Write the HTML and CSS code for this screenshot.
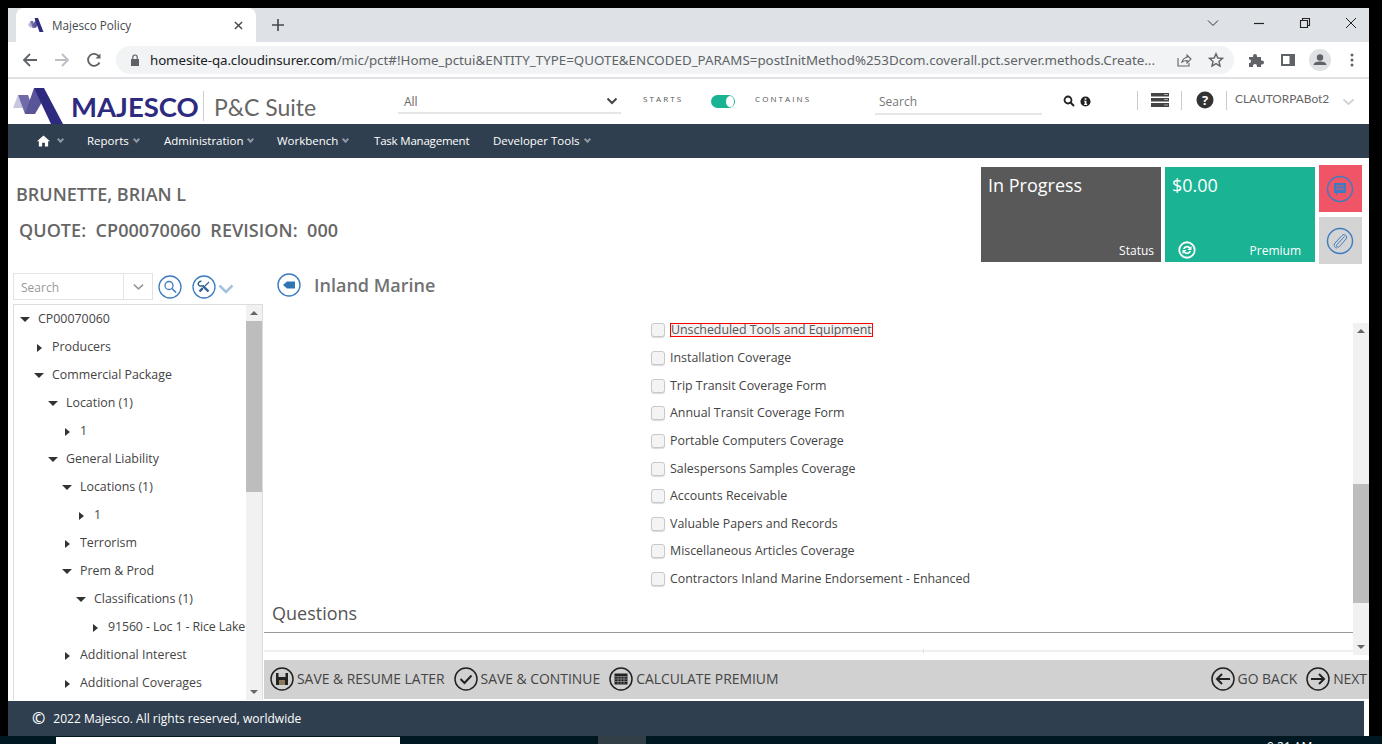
FILE: index.html
```html
<!doctype html>
<html lang="en">
<head>
	<meta charset="utf-8">
	<title>Majesco Policy</title>
	<link rel="stylesheet" href="styles.css">
</head>
<body>
<div class="window">
	<div class="tabstrip">
		<div class="tab">
			<svg class="favicon" viewBox="0 0 16 14"><path d="M0 7 2.500 3 5 7 3 10z" fill="#b7b3d6"/><path d="M2.500 3H5L7.500 10H4.500z" fill="#6f6aa8"/><path d="M5 7 8 1 10 7 7.500 10z" fill="#5a5599"/><path d="M6.500 0H10L15.500 14H11.500z" fill="#2e2a7f"/></svg>
			<span class="tab-title">Majesco Policy</span>
			<svg class="tab-close" viewBox="0 0 10 10"><path d="M1 1 9 9M9 1 1 9" stroke="#45494d" stroke-width="1.600"/></svg>
		</div>
		<svg class="tab-new" viewBox="0 0 12 12"><path d="M6 0V12M0 6H12" stroke="#45494d" stroke-width="1.600"/></svg>
		<div class="win-controls">
			<svg viewBox="0 0 12 12"><path d="M1 3.500 6 8.500 11 3.500" fill="none" stroke="#333" stroke-width="1"/></svg>
			<svg viewBox="0 0 12 12"><path d="M1 6.500H11" stroke="#222" stroke-width="1.200"/></svg>
			<svg viewBox="0 0 12 12"><path d="M1.500 3.500H8.500V10.500H1.500zM3.500 3.500V1.500H10.500V8.500H8.500" fill="none" stroke="#222" stroke-width="1.100"/></svg>
			<svg viewBox="0 0 12 12"><path d="M1 1 11 11M11 1 1 11" stroke="#222" stroke-width="1"/></svg>
		</div>
	</div>

	<div class="toolbar">
		<svg class="tb-icon" viewBox="0 0 16 16"><path d="M15 8H2M8 2 2 8 8 14" fill="none" stroke="#5f6368" stroke-width="1.800"/></svg>
		<svg class="tb-icon" viewBox="0 0 16 16"><path d="M1 8H14M8 2 14 8 8 14" fill="none" stroke="#bcc0c4" stroke-width="1.800"/></svg>
		<svg class="tb-icon" viewBox="0 0 16 16"><path d="M13.500 10.500A6 6 0 1 1 13 4.500" fill="none" stroke="#5f6368" stroke-width="1.800"/><path d="M14.500 1.500V6.500H9.500z" fill="#5f6368"/></svg>
		<div class="omnibox">
			<svg class="lock" viewBox="0 0 10 12"><path d="M1 5H9V12H1z" fill="#5f6368"/><path d="M2.800 5V3.200A2.200 2.200 0 0 1 7.200 3.200V5" fill="none" stroke="#5f6368" stroke-width="1.200"/></svg>
			<span class="url"><b>homesite-qa.cloudinsurer.com</b>/mic/pct#!Home_pctui&amp;ENTITY_TYPE=QUOTE&amp;ENCODED_PARAMS=postInitMethod%253Dcom.coverall.pct.server.methods.Create...</span>
			<svg class="omni-icon share" viewBox="0 0 16 16"><path d="M2 6V14H13V11M6 10C7 7 9 5.500 11 5.500V3L15 7 11 11V8.500C9 8.500 7.500 9 6 10z" fill="none" stroke="#5f6368" stroke-width="1.100"/></svg>
			<svg class="omni-icon star" viewBox="0 0 16 16"><path d="M8 1.800 9.800 6 14.500 6.400 11 9.400 12 14 8 11.600 4 14 5 9.400 1.500 6.400 6.200 6z" fill="none" stroke="#5f6368" stroke-width="1.400"/></svg>
		</div>
		<svg class="tb-icon puzzle" viewBox="0 0 16 16"><path d="M1 5H5V4A2 2 0 0 1 9 4V5H13V8.500H14A2 2 0 0 1 14 12.500H13V15H9V14A2 2 0 0 0 5 14V15H1V11H2A2 2 0 0 0 2 7.500H1z" fill="#5f6368"/></svg>
		<svg class="tb-icon" viewBox="0 0 16 16"><path d="M1 2H15V14H1z" fill="#5f6368"/><path d="M3 4H9.500V12H3z" fill="#fff"/></svg>
		<span class="avatar"><svg viewBox="0 0 22 22"><circle cx="11" cy="8.500" r="3.200" fill="#5f6368"/><path d="M4.500 16C5 13 8 12.500 11 12.500S17 13 17.500 16z" fill="#5f6368"/></svg></span>
		<svg class="tb-icon" viewBox="0 0 16 16"><circle cx="8" cy="3" r="1.500" fill="#5f6368"/><circle cx="8" cy="8" r="1.500" fill="#5f6368"/><circle cx="8" cy="13" r="1.500" fill="#5f6368"/></svg>
	</div>

	<header class="app-head">
		<svg class="logo-mark" viewBox="0 0 52 36"><path d="M0 20 5 7 10 20z" fill="#c9c6e0"/><path d="M5 7H15L22 26H12z" fill="#6f6aa8"/><path d="M12 26H22L32 9 21 0z" fill="#5a5599"/><path d="M21 0H31L50 36H38z" fill="#2e2a7f"/></svg>
		<span class="logo-word">MAJESCO</span>
		<span class="logo-sep"></span>
		<span class="logo-suite">P&amp;C Suite</span>
		<div class="scope-select"><span>All</span><svg viewBox="0 0 12 8"><path d="M1.500 1.500 6 6 10.500 1.500" fill="none" stroke="#444" stroke-width="2"/></svg></div>
		<span class="match-label starts">STARTS</span>
		<span class="toggle"><i></i></span>
		<span class="match-label contains">CONTAINS</span>
		<div class="head-search">Search</div>
		<svg class="head-mag" viewBox="0 0 12 12"><circle cx="5" cy="5" r="3.500" fill="none" stroke="#222" stroke-width="1.800"/><path d="M7.500 7.500 11 11" stroke="#222" stroke-width="2"/></svg>
		<svg class="head-info" viewBox="0 0 12 12"><circle cx="6" cy="6" r="5.500" fill="#222"/><path d="M5 2.500H7V4.200H5zM4.500 5.200H7V8.500H7.800V9.800H4.500V8.500H5.200V6.400H4.500z" fill="#fff"/></svg>
		<span class="head-sep first"></span>
		<svg class="head-menu" viewBox="0 0 18 14"><path d="M0 0H18V3.500H0zM0 5H18V8.500H0zM0 10H18V14H0z" fill="#444"/><path d="M13 1.500H17M13 6.500H17M13 12H17" stroke="#aaa" stroke-width="1"/></svg>
		<span class="head-sep"></span>
		<svg class="head-help" viewBox="0 0 18 18"><circle cx="9" cy="9" r="8.500" fill="#333"/><text x="9" y="13.500" class="help-mark">?</text></svg>
		<span class="head-sep"></span>
		<span class="head-user">CLAUTORPABot2</span>
		<svg class="head-chev" viewBox="0 0 12 8"><path d="M1 1.500 6 6 11 1.500" fill="none" stroke="#cfd2d4" stroke-width="1.800"/></svg>
	</header>

	<nav class="main-nav">
		<svg class="nav-home" viewBox="0 0 14 12"><path d="M7 0 14 6.200H12V12H8.500V8H5.500V12H2V6.200H0z" fill="#fff"/></svg>
		<span class="nav-chev home"></span>
		<a class="nav-item reports">Reports<span class="nav-chev"></span></a>
		<a class="nav-item admin">Administration<span class="nav-chev"></span></a>
		<a class="nav-item bench">Workbench<span class="nav-chev"></span></a>
		<a class="nav-item task">Task Management</a>
		<a class="nav-item dev">Developer Tools<span class="nav-chev"></span></a>
	</nav>

	<section class="summary">
		<div class="policy-id">
			<div class="insured">BRUNETTE, BRIAN L</div>
			<div class="quote-line">QUOTE:&nbsp; CP00070060&nbsp; REVISION:&nbsp; 000</div>
		</div>
		<div class="tile status">
			<div class="tile-value">In Progress</div>
			<div class="tile-foot"><span>Status</span></div>
		</div>
		<div class="tile premium">
			<div class="tile-value">$0.00</div>
			<div class="tile-foot">
				<svg class="refresh" viewBox="0 0 20 20"><circle cx="10" cy="10" r="8.600" fill="none" stroke="#fff" stroke-width="2"/><path d="M5.500 9A4.600 4.600 0 0 1 13.500 7L15 5.500V10H10.500L12.200 8.300A2.800 2.800 0 0 0 7.500 9zM14.500 11A4.600 4.600 0 0 1 6.500 13L5 14.500V10H9.500L7.800 11.700A2.800 2.800 0 0 0 12.500 11z" fill="#fff"/></svg>
				<span>Premium</span>
			</div>
		</div>
		<div class="side-btns">
			<span class="side-btn red"><svg viewBox="0 0 28 28"><circle cx="14" cy="14" r="12.500" fill="none" stroke="#3d7cc0" stroke-width="1.400"/><path d="M8 8H20V18H12L10 20.500V18H8z" fill="#3d7cc0"/><path d="M10 11H18M10 14H18" stroke="#ef5567" stroke-width="1"/></svg></span>
			<span class="side-btn grey"><svg viewBox="0 0 28 28"><circle cx="14" cy="14" r="12.500" fill="none" stroke="#3d7cc0" stroke-width="1.400"/><path d="M18.500 9.500 11 17.500C9.500 19.500 12 21 13.500 19.500L20 12C22 9.500 18.500 6 16 8.500L9 16C7 18.500 9 21 11 21" fill="none" stroke="#3d7cc0" stroke-width="1"/></svg></span>
		</div>
	</section>

	<div class="workspace">
		<aside class="sidebar">
			<div class="side-tools">
				<div class="tree-search"><span>Search</span><i><svg viewBox="0 0 12 8"><path d="M1 1.500 6 6 11 1.500" fill="none" stroke="#999" stroke-width="1.800"/></svg></i></div>
				<svg class="round-btn" viewBox="0 0 24 24"><circle cx="12" cy="12" r="11" fill="none" stroke="#3d7cc0" stroke-width="1.300"/><circle cx="11" cy="10.500" r="4" fill="none" stroke="#3d7cc0" stroke-width="1.300"/><path d="M14 13.500 18 17.500" stroke="#3d7cc0" stroke-width="1.600"/></svg>
				<svg class="round-btn tools" viewBox="0 0 24 24"><circle cx="12" cy="12" r="11" fill="none" stroke="#3d7cc0" stroke-width="1.300"/><path d="M10.500 10.500 16.500 16.500" stroke="#2f5f8f" stroke-width="2.400"/><path d="M9.500 6.200A3 3 0 0 0 6.200 9.500 3 3 0 0 0 10.500 10.500" fill="none" stroke="#2f5f8f" stroke-width="1.500"/><path d="M7.500 16.500 10.800 13.200" stroke="#2f5f8f" stroke-width="2.400"/><path d="M13 11 17 7" stroke="#2f5f8f" stroke-width="1.100"/></svg>
				<svg class="tools-chev" viewBox="0 0 16 10"><path d="M1.500 1.500 8 8 14.500 1.500" fill="none" stroke="#a5c3dd" stroke-width="2.600"/></svg>
			</div>
			<div class="tree-box">
				<ul class="tree">
					<li class="open l0">CP00070060</li>
					<li class="l1">Producers</li>
					<li class="open l1">Commercial Package</li>
					<li class="open l2">Location (1)</li>
					<li class="l3">1</li>
					<li class="open l2">General Liability</li>
					<li class="open l3">Locations (1)</li>
					<li class="l4">1</li>
					<li class="l3">Terrorism</li>
					<li class="open l3">Prem &amp; Prod</li>
					<li class="open l4">Classifications (1)</li>
					<li class="l5">91560 - Loc 1 - Rice Lake</li>
					<li class="l3">Additional Interest</li>
					<li class="l3">Additional Coverages</li>
				</ul>
				<div class="scroll tree-scroll"><span class="arrow up"></span><span class="track"><i></i></span><span class="arrow down"></span></div>
			</div>
		</aside>

		<main class="content">
			<div class="page-title">
				<svg class="back-btn" viewBox="0 0 24 24"><circle cx="12" cy="12" r="11" fill="none" stroke="#3d7cc0" stroke-width="1.400"/><path d="M6 12 10 8.500H18V15.500H10z" fill="#2f75b5"/></svg>
				<h2>Inland Marine</h2>
			</div>
			<div class="form-panel">
				<div class="form-body">
					<ul class="checks">
						<li class="flagged"><input type="checkbox"><label>Unscheduled Tools and Equipment</label></li>
						<li><input type="checkbox"><label>Installation Coverage</label></li>
						<li><input type="checkbox"><label>Trip Transit Coverage Form</label></li>
						<li><input type="checkbox"><label>Annual Transit Coverage Form</label></li>
						<li><input type="checkbox"><label>Portable Computers Coverage</label></li>
						<li><input type="checkbox"><label>Salespersons Samples Coverage</label></li>
						<li><input type="checkbox"><label>Accounts Receivable</label></li>
						<li><input type="checkbox"><label>Valuable Papers and Records</label></li>
						<li><input type="checkbox"><label>Miscellaneous Articles Coverage</label></li>
						<li><input type="checkbox"><label>Contractors Inland Marine Endorsement - Enhanced</label></li>
					</ul>
					<h3 class="questions">Questions</h3>
					<div class="next-row"><i></i></div>
				</div>
				<div class="scroll form-scroll"><span class="arrow up"></span><span class="track"><i></i></span><span class="arrow down"></span></div>
			</div>
			<div class="action-bar">
				<a class="action"><svg viewBox="0 0 24 24"><circle cx="12" cy="12" r="11" fill="none" stroke="#222" stroke-width="1.500"/><path d="M6 6H18V18H6z" fill="#222"/><path d="M8.500 6H15.500V10H8.500z" fill="#ccc"/><path d="M9 13H15V18H9z" fill="#8a7a5a"/></svg>SAVE &amp; RESUME LATER</a>
				<a class="action"><svg viewBox="0 0 24 24"><circle cx="12" cy="12" r="11" fill="none" stroke="#222" stroke-width="1.500"/><path d="M6.500 12 10.500 16 17.500 8.500" fill="none" stroke="#222" stroke-width="2"/></svg>SAVE &amp; CONTINUE</a>
				<a class="action"><svg viewBox="0 0 24 24"><circle cx="12" cy="12" r="11" fill="none" stroke="#222" stroke-width="1.500"/><path d="M5.500 6.500H18.500V17.500H5.500z" fill="#222"/><path d="M5.500 9.500H18.500M5.500 12H18.500M5.500 14.500H18.500M9 9.500V17.500M12 9.500V17.500M15 9.500V17.500" stroke="#999" stroke-width=".7"/></svg>CALCULATE PREMIUM</a>
				<span class="action-gap"></span>
				<a class="action"><svg viewBox="0 0 24 24"><circle cx="12" cy="12" r="11" fill="none" stroke="#222" stroke-width="1.500"/><path d="M19 12H6M11 7 6 12 11 17" fill="none" stroke="#222" stroke-width="2"/></svg>GO BACK</a>
				<a class="action"><svg viewBox="0 0 24 24"><circle cx="12" cy="12" r="11" fill="none" stroke="#222" stroke-width="1.500"/><path d="M5 12H18M13 7 18 12 13 17" fill="none" stroke="#222" stroke-width="2"/></svg>NEXT</a>
			</div>
		</main>
	</div>

	<footer class="app-foot"><span class="copy">©</span>2022 Majesco. All rights reserved, worldwide</footer>
</div>
<div class="taskbar"><span class="task-white"></span><span class="task-active"></span><span class="clock">9:21 AM</span></div>
</body>
</html>
```

FILE: styles.css
```css
* {
	box-sizing: border-box;
}

html, body {
	margin: 0;
	height: 744px;
	overflow: hidden;
	background: #000;
}

body {
	padding-top: 8px;
	font-family: "Open Sans", sans-serif;
	color: #676a6c;
}

ul {
	list-style: none;
	margin: 0;
	padding: 0;
}

.window {
	margin-left: 8px;
	width: 1361px;
	height: 728px;
	background: #fff;
	display: flex;
	flex-direction: column;
}

/* browser chrome */
.tabstrip {
	height: 34px;
	background: #dee1e6;
	display: flex;
	align-items: center;
	flex: none;
}

.tab {
	margin-left: 8px;
	width: 240px;
	height: 34px;
	background: #fff;
	border-radius: 8px 8px 0 0;
	display: flex;
	align-items: center;
	padding: 0 12px;
}

.favicon {
	width: 16px;
	height: 14px;
}

.tab-title {
	margin-left: 8px;
	font-size: 11.700px;
	color: #45494d;
	flex: 1;
}

.tab-close {
	width: 9px;
	height: 9px;
	margin-right: 1px;
}

.tab-new {
	width: 12px;
	height: 12px;
	margin-left: 16px;
}

.win-controls {
	margin-left: auto;
	display: flex;
	gap: 34px;
	padding: 0 12px 4px 0;
}

.win-controls svg {
	width: 12px;
	height: 12px;
}

.toolbar {
	height: 37px;
	flex: none;
	background: #fff;
	border-bottom: 2px solid #dfe1e5;
	display: flex;
	align-items: center;
	padding-left: 14px;
	gap: 16px;
}

.tb-icon {
	width: 16px;
	height: 16px;
	flex: none;
}

.omnibox {
	width: 1118px;
	height: 28px;
	margin-left: -2px;
	margin-right: -2px;
	background: #f1f3f4;
	border-radius: 14px;
	display: flex;
	align-items: center;
	padding-left: 14px;
	flex: none;
}

.lock {
	width: 10px;
	height: 12px;
	flex: none;
}

.url {
	margin-left: 10px;
	font-family: "Noto Sans", sans-serif;
	font-size: 13.350px;
	color: #5f6368;
	white-space: nowrap;
	width: 1028px;
	flex: none;
	overflow: hidden;
}

.url b {
	font-weight: 400;
	color: #202124;
	letter-spacing: -.1px;
}

.omni-icon {
	width: 16px;
	height: 16px;
	flex: none;
}

.share {
	margin-left: -2px;
}

.star {
	margin-left: 16px;
}

.avatar {
	width: 22px;
	height: 22px;
	border-radius: 50%;
	background: #dfe1e5;
	margin: 0 -3px;
	flex: none;
}

.avatar svg {
	display: block;
}

/* app header */
.app-head {
	height: 45px;
	flex: none;
	display: flex;
	align-items: center;
	position: relative;
	overflow: hidden;
}

.logo-mark {
	width: 52px;
	height: 36px;
	margin: 9px 0 0 5px;
	flex: none;
}

.logo-word {
	margin-left: 6px;
	width: 128px;
	font-family: Lato, sans-serif;
	font-weight: 700;
	font-size: 27.500px;
	color: #2e2a7f;
	flex: none;
	padding-top: 10px;
}

.logo-sep {
	width: 1px;
	height: 30px;
	background: #ccc;
	margin: 8px 0 0 4px;
	flex: none;
}

.logo-suite {
	margin-left: 10px;
	width: 184px;
	font-family: Lato, sans-serif;
	font-size: 23px;
	color: #666;
	flex: none;
	padding-top: 10px;
}

.scope-select {
	width: 223px;
	height: 24px;
	border-bottom: 2px solid #e6e6e6;
	margin-top: 1px;
	display: flex;
	align-items: center;
	justify-content: space-between;
	padding: 0 3px 0 6px;
	font-size: 12px;
	color: #666;
	flex: none;
}

.scope-select svg {
	width: 12px;
	height: 8px;
}

.match-label {
	font-size: 8px;
	letter-spacing: 2.100px;
	color: #555;
	flex: none;
	margin-top: -6px;
}

.match-label.starts {
	margin-left: 22px;
	width: 68px;
}

.toggle {
	width: 24px;
	height: 13px;
	border-radius: 7px;
	background: #1ab394;
	flex: none;
	margin-top: -1px;
	display: flex;
	justify-content: flex-end;
	align-items: center;
	padding-right: 1px;
}

.toggle i {
	width: 8px;
	height: 11px;
	background: #fff;
	border-radius: 50%;
}

.match-label.contains {
	margin-left: 20px;
	width: 120px;
}

.head-search {
	width: 167px;
	height: 23px;
	border-bottom: 2px solid #e6e6e6;
	margin-top: 4px;
	padding: 1px 0 0 4px;
	font-size: 12px;
	color: #777;
	flex: none;
}

.head-mag {
	width: 12px;
	height: 12px;
	margin: -1px 0 0 21px;
	flex: none;
}

.head-info {
	width: 11px;
	height: 11px;
	margin: -1px 0 0 5px;
	flex: none;
}

.head-sep {
	width: 1px;
	height: 19px;
	background: #ccc;
	margin-top: -3px;
	flex: none;
}

.head-sep.first {
	margin-left: 46px;
}

.head-menu {
	width: 18px;
	height: 14px;
	margin: -3px 12px 0 13px;
	flex: none;
}

.head-help {
	width: 18px;
	height: 18px;
	margin: -3px 12px 0 14px;
	flex: none;
}

.help-mark {
	font-family: "Open Sans", sans-serif;
	font-weight: 700;
	font-size: 13px;
	fill: #fff;
	text-anchor: middle;
}

.head-user {
	margin: -6px 0 0 8px;
	width: 107px;
	font-family: Lato, sans-serif;
	font-size: 11.900px;
	color: #666;
	flex: none;
}

.head-chev {
	width: 13px;
	height: 8px;
	flex: none;
}

/* main nav */
.main-nav {
	height: 34px;
	flex: none;
	background: #303f4f;
	display: flex;
	align-items: center;
	color: #fff;
	font-size: 11.500px;
	position: relative;
	padding-bottom: 2px;
}

.nav-home {
	width: 13px;
	height: 12px;
	margin: 2px 0 0 29px;
	flex: none;
}

.nav-item {
	display: flex;
	align-items: center;
	flex: none;
	white-space: nowrap;
}

.nav-chev {
	width: 5px;
	height: 5px;
	border-right: 2px solid #8b97a3;
	border-bottom: 2px solid #8b97a3;
	transform: rotate(45deg);
	margin: -2px 0 0 5px;
	flex: none;
}

.nav-chev.home {
	margin-left: 8px;
}

.reports { margin-left: 24px; width: 77px; }
.admin { width: 113px; }
.bench { width: 97px; }
.task { width: 119px; letter-spacing: -.2px; }

/* status row */
.summary {
	height: 107px;
	flex: none;
	display: flex;
	align-items: flex-start;
}

.policy-id {
	width: 973px;
	flex: none;
	font-weight: 600;
	color: #666;
	font-size: 18px;
}

.insured {
	margin: 24px 0 0 8px;
	line-height: 24px;
}

.quote-line {
	margin: 12px 0 0 11px;
	line-height: 24px;
	letter-spacing: .05px;
}

.tile {
	margin-top: 9px;
	height: 95px;
	color: #fff;
	display: flex;
	flex-direction: column;
	justify-content: space-between;
	flex: none;
}

.tile.status {
	width: 180px;
	background: #595959;
	margin-right: 4px;
}

.tile.premium {
	width: 150px;
	background: #1ab394;
	margin-right: 4px;
}

.tile-value {
	font-size: 18px;
	line-height: 24px;
	padding: 6px 0 0 7px;
}

.tile-foot {
	display: flex;
	justify-content: space-between;
	align-items: center;
	font-size: 12px;
	padding: 0 7px 0 13px;
	height: 24px;
}

.tile.status .tile-foot {
	justify-content: flex-end;
}

.tile.premium .tile-foot {
	padding-right: 14px;
}

.refresh {
	width: 18px;
	height: 18px;
}

.side-btns {
	margin-top: 7px;
	width: 43px;
	flex: none;
	display: flex;
	flex-direction: column;
	gap: 5px;
}

.side-btn {
	height: 47px;
	display: flex;
	align-items: center;
	justify-content: center;
}

.side-btn svg {
	width: 28px;
	height: 28px;
	margin-left: -2px;
}

.side-btn.red {
	background: #ef5567;
}

.side-btn.grey {
	background: #d4d4d4;
}

/* body split */
.workspace {
	flex: 1;
	min-height: 0;
	display: flex;
}

.sidebar {
	width: 256px;
	flex: none;
	padding: 8px 0 0 5px;
	display: flex;
	flex-direction: column;
}

.side-tools {
	height: 27px;
	display: flex;
	align-items: center;
	flex: none;
}

.tree-search {
	width: 140px;
	height: 27px;
	border: 1px solid #e3e3e3;
	display: flex;
	font-size: 12px;
	color: #999;
	line-height: 27px;
	flex: none;
}

.tree-search span {
	flex: 1;
	padding-left: 7px;
}

.tree-search i {
	width: 29px;
	border-left: 1px solid #e3e3e3;
	display: flex;
	align-items: center;
	justify-content: center;
}

.tree-search svg {
	width: 11px;
	height: 8px;
}

.round-btn {
	width: 24px;
	height: 24px;
	margin-left: 5px;
	flex: none;
}

.round-btn.tools {
	margin-left: 10px;
}

.tools-chev {
	width: 16px;
	height: 10px;
	margin: 4px 0 0 2px;
	flex: none;
}

.tree-box {
	margin-top: 4px;
	height: 396px;
	width: 250px;
	border: 1px solid #ddd;
	border-bottom: 0;
	display: flex;
	overflow: hidden;
	flex: none;
}

.tree {
	flex: 1;
	min-width: 0;
	font-size: 12.400px;
	color: #444;
	overflow: hidden;
}

.tree li {
	height: 28px;
	line-height: 28px;
	white-space: nowrap;
}

.tree li::before {
	content: "";
	display: inline-block;
	width: 0;
	height: 0;
	border-left: 5px solid #333;
	border-top: 4px solid transparent;
	border-bottom: 4px solid transparent;
	margin-right: 10px;
	vertical-align: -1px;
}

.tree li.open::before {
	border-top: 5px solid #333;
	border-left: 5px solid transparent;
	border-right: 5px solid transparent;
	border-bottom: 0;
	margin-left: -3px;
	margin-right: 8px;
	vertical-align: 1px;
}

.l0 { padding-left: 9px; }
.l1 { padding-left: 23px; }
.l2 { padding-left: 37px; }
.l3 { padding-left: 51px; }
.l4 { padding-left: 65px; }
.l5 { padding-left: 79px; letter-spacing: -.12px; }

.scroll {
	width: 16px;
	flex: none;
	background: #f1f1f1;
	display: flex;
	flex-direction: column;
	align-items: stretch;
}

.arrow {
	height: 16px;
	flex: none;
	display: flex;
	align-items: center;
	justify-content: center;
}

.arrow::before {
	content: "";
	border-left: 4px solid transparent;
	border-right: 4px solid transparent;
}

.arrow.up::before {
	border-bottom: 4px solid #666;
}

.arrow.down::before {
	border-top: 4px solid #666;
}

.track {
	flex: 1;
}

.track i {
	display: block;
	background: #bdbdbd;
}

.tree-scroll .track i {
	height: 171px;
}

.form-scroll .track {
	padding-top: 145px;
}

.form-scroll .track i {
	height: 119px;
}

/* form area */
.content {
	flex: 1;
	min-width: 0;
	display: flex;
	flex-direction: column;
}

.page-title {
	height: 58px;
	display: flex;
	align-items: flex-start;
	padding: 8px 0 0 13px;
	flex: none;
}

.back-btn {
	width: 24px;
	height: 24px;
	flex: none;
}

.page-title h2 {
	margin: 0 0 0 13px;
	font-size: 18px;
	line-height: 24px;
	font-weight: 600;
	color: #707274;
}

.form-panel {
	height: 332px;
	display: flex;
	flex: none;
}

.form-body {
	flex: 1;
	min-width: 0;
	overflow: hidden;
}

.checks {
	padding-left: 387px;
	margin-top: -6.600px;
}

.checks li {
	height: 27.670px;
	display: flex;
	align-items: center;
	font-size: 12.400px;
	color: #444;
}

.checks label {
	line-height: 14px;
}

.checks input {
	appearance: none;
	width: 14px;
	height: 14px;
	margin: 0 5px 0 0;
	background: #f4f4f4;
	border: 1px solid #c9c9c9;
	border-radius: 3px;
	box-shadow: 0 1px 1px rgba(0, 0, 0, .15);
	flex: none;
}

.flagged label {
	box-shadow: inset 0 0 0 1px #f00;
	background: #f2f2f2;
	color: #555;
	padding: 0 1px;
	letter-spacing: -.03px;
}

.questions {
	margin: 6.600px 0 0 8px;
	height: 34px;
	font-size: 18px;
	line-height: 26px;
	font-weight: 400;
	color: #555;
}

.next-row {
	border-top: 1px solid #999;
	height: 20px;
	border-bottom: 2px solid #f0f0f0;
	position: relative;
	margin-top: -2px;
}

.next-row i {
	position: absolute;
	left: 659px;
	top: 16px;
	width: 1px;
	height: 4px;
	background: #ddd;
}

.action-bar {
	margin-top: 5px;
	height: 39px;
	background: #d1d1d1;
	display: flex;
	align-items: center;
	padding: 0 2px 2px 6px;
	gap: 9px;
	flex: none;
}

.action {
	display: flex;
	align-items: center;
	gap: 3px;
	font-size: 13.900px;
	color: #444;
	white-space: nowrap;
	flex: none;
}

.action svg {
	width: 24px;
	height: 24px;
	flex: none;
}

.action-gap {
	flex: 1;
}

.app-foot {
	margin-top: auto;
	width: 1356px;
	height: 35px;
	flex: none;
	background: #303f4f;
	color: #fff;
	font-size: 12px;
	line-height: 35px;
	padding-left: 24px;
}

.copy {
	font-size: 16px;
	font-weight: 600;
	margin-right: 8px;
	vertical-align: -1px;
}

/* OS taskbar peeking out below the window */
.taskbar {
	height: 8px;
	background: #001822;
	display: flex;
	overflow: hidden;
}

.task-white {
	margin: 1px 0 0 56px;
	width: 344px;
	background: #fff;
}

.task-active {
	margin-left: 198px;
	width: 48px;
	background: #333f47;
}

.clock {
	margin-left: 621px;
	font-size: 12px;
	line-height: 12px;
	color: #fff;
	padding-top: 5px;
}
```
